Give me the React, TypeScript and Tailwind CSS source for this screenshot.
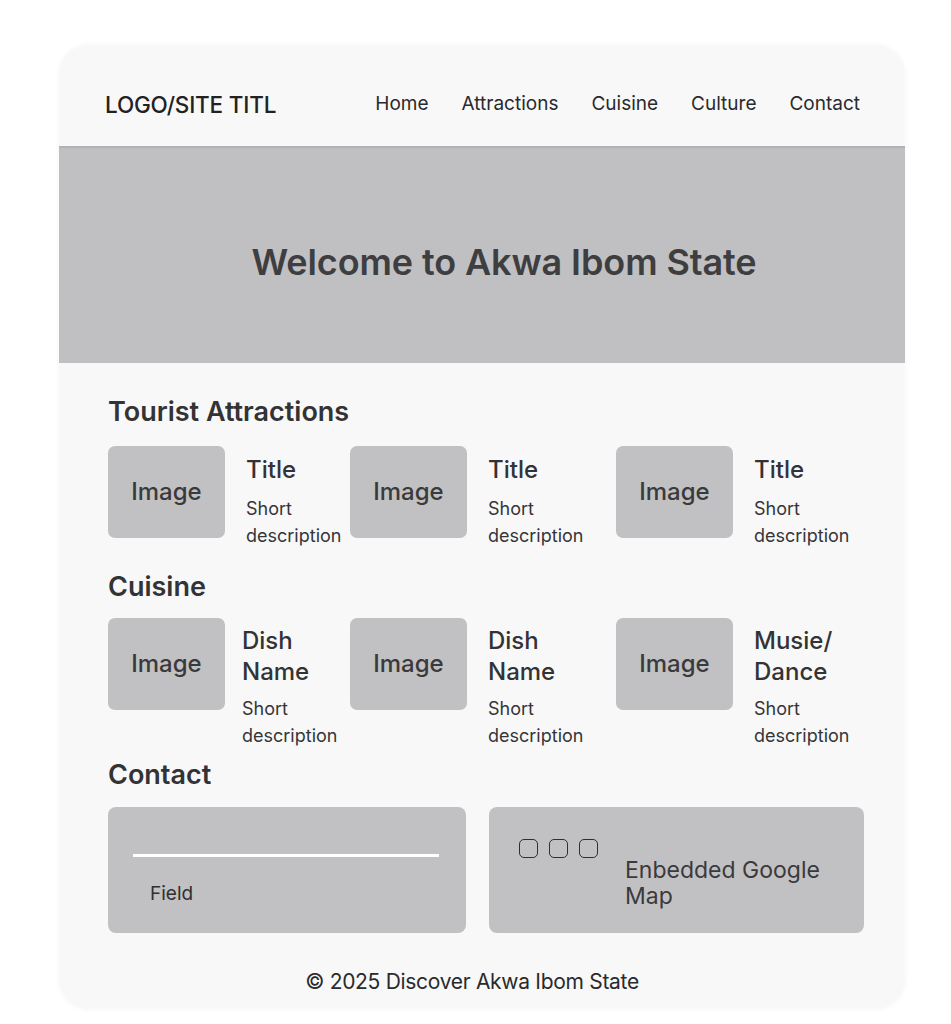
import React from 'react';

interface Item {
  title: string[];
  offset?: string;
}

const attractions: Item[] = [{ title: ['Title'] }, { title: ['Title'] }, { title: ['Title'] }];
const dishes: Item[] = [
  { title: ['Dish', 'Name'], offset: 'ml-[-4px]' },
  { title: ['Dish', 'Name'] },
  { title: ['Musie/', 'Dance'] },
];

const ImageBox: React.FC = () => (
  <div className="w-[117px] h-[92px] shrink-0 rounded-[7px] bg-[#c1c1c3] flex items-center justify-center text-[24px] font-medium text-[#3a3a3c]">
    Image
  </div>
);

const Card: React.FC<{ item: Item; top: string; gap: string }> = ({ item, top, gap }) => (
  <div className="flex items-start gap-[21px]">
    <ImageBox />
    <div className={`${top} ${item.offset ?? ''}`}>
      {item.title.map((t) => (
        <div key={t} className="text-[24px] leading-[31px] font-medium text-[#333335]">
          {t}
        </div>
      ))}
      <div className={`${gap} text-[18px] leading-[27px] text-[#353537]`}>
        Short
        <br />
        description
      </div>
    </div>
  </div>
);

const Row: React.FC<{ items: Item[]; top: string; gap: string }> = ({ items, top, gap }) => (
  <div className="grid grid-cols-[242px_266px_1fr]">
    {items.map((item, i) => (
      <Card key={i} item={item} top={top} gap={gap} />
    ))}
  </div>
);

const App: React.FC = () => {
  const links = ['Home', 'Attractions', 'Cuisine', 'Culture', 'Contact'];

  return (
    <div className="min-h-screen bg-white pt-[45px] px-[59px] pb-[16px] font-['Inter','Liberation_Sans',sans-serif]">
      <div className="w-[846px] rounded-[30px] bg-[#f8f8f8] shadow-[0_0_6px_rgba(0,0,0,0.04)] overflow-hidden">
        {/* Header */}
        <header className="h-[101px] flex items-center justify-between pl-[46px] pr-[45px] pt-[18px]">
          <div className="text-[22.5px] font-medium tracking-[-0.2px] text-[#222224]">LOGO/SITE TITL</div>
          <nav className="flex items-center gap-[33px] text-[19px] text-[#2a2a2c]">
            {links.map((l) => (
              <span key={l}>{l}</span>
            ))}
          </nav>
        </header>

        {/* Hero */}
        <section className="h-[217px] bg-[#c0c0c2] border-t-2 border-[#b2b2b4] flex items-center justify-center pt-[12px] pl-[44px]">
          <h1 className="text-[36px] font-semibold tracking-[-0.1px] text-[#3e3e41]">Welcome to Akwa Ibom State</h1>
        </section>

        <main className="pl-[49px] pr-[41px] pt-[32px]">
          <h2 className="text-[27px] leading-[34px] font-semibold text-[#333335]">Tourist Attractions</h2>
          <div className="mt-[17px]">
            <Row items={attractions} top="mt-[8px]" gap="mt-[10px]" />
          </div>

          <h2 className="mt-[21px] text-[27px] leading-[34px] font-semibold text-[#333335]">Cuisine</h2>
          <div className="mt-[14px]">
            <Row items={dishes} top="mt-[7px]" gap="mt-[8px]" />
          </div>

          <h2 className="mt-[9px] text-[27px] leading-[34px] font-semibold text-[#333335]">Contact</h2>
          <div className="mt-[15px] flex gap-[23px]">
            <div className="w-[358px] h-[126px] rounded-[8px] bg-[#c1c1c3] px-[25px] pt-[47px]">
              <div className="h-[3px] bg-white w-[306px]" />
              <div className="mt-[23px] ml-[17px] text-[19px] text-[#2f2f31]">Field</div>
            </div>
            <div className="w-[375px] h-[126px] rounded-[8px] bg-[#c1c1c3] flex pl-[30px] pt-[32px]">
              <div className="flex gap-[11px] shrink-0">
                {[0, 1, 2].map((i) => (
                  <div key={i} className="w-[19px] h-[19px] rounded-[5px] border-[1.5px] border-[#2f2f31]" />
                ))}
              </div>
              <div className="ml-[27px] mt-[18px] text-[23px] leading-[26px] text-[#3a3a3c]">
                Enbedded Google
                <br />
                Map
              </div>
            </div>
          </div>
        </main>

        <footer className="h-[76px] flex items-center justify-center text-[21px] tracking-[-0.3px] text-[#2a2a2c] pr-[20px] pt-[22px]">
          © 2025 Discover Akwa Ibom State
        </footer>
      </div>
    </div>
  );
};

export default App;
